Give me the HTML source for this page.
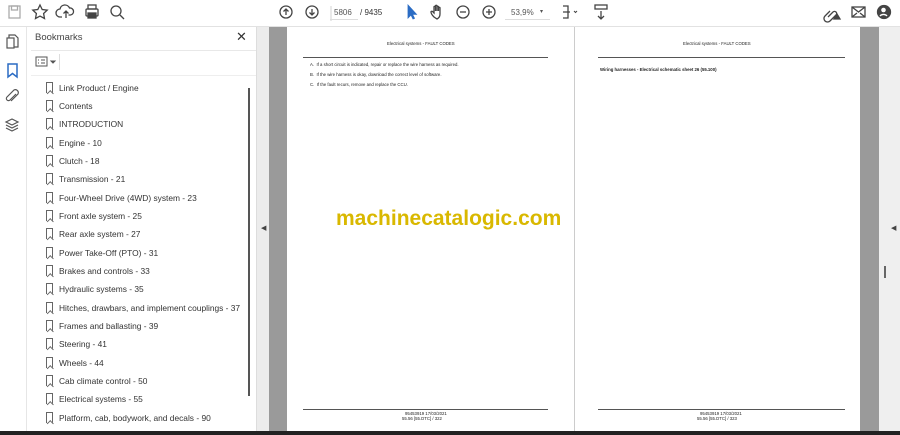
<!DOCTYPE html>
<html><head><style>
*{margin:0;padding:0;box-sizing:border-box}
body{width:900px;height:435px;overflow:hidden;background:#fff;font-family:"Liberation Sans",sans-serif;position:relative}
.a{position:absolute}
.tb{left:0;top:0;width:900px;height:27px;background:#fff;border-bottom:1px solid #e2e2e2}
.bm{position:absolute;left:46px;font-size:8.4px;color:#333;height:12px;line-height:12px}
.bm i{position:absolute;left:0;top:0;width:7px;height:11px;border:1.3px solid #666;border-bottom:none}
.bm i:after{content:"";position:absolute;left:0.5px;bottom:-2px;width:3.5px;height:3.5px;border-left:1.3px solid #666;border-top:1.3px solid #666;transform:rotate(45deg);background:#fff}
.bm span{position:absolute;left:13px;white-space:nowrap}
.pg{background:#fff;top:27px;height:404px}
.t{font-size:4.3px;color:#222;white-space:nowrap}
</style></head><body>
<div class="a tb"></div>
<svg class="a" style="left:0;top:0" width="900" height="27" fill="none" stroke="#444" stroke-width="1.3">
<rect x="9" y="6" width="11" height="12" stroke="#aaa"/><rect x="11.5" y="6" width="6" height="4" stroke="#aaa"/>
<path d="M40 5l2.2 4.5 5 .6-3.6 3.4.9 5-4.5-2.4-4.5 2.4.9-5-3.6-3.4 5-.6z"/>
<path d="M62 17h-2a4 4 0 0 1 0-8 5 5 0 0 1 9.5-1 3.5 3.5 0 0 1 1 7h-2M66 18v-7m-2.5 2.5L66 11l2.5 2.5"/>
<rect x="86" y="9" width="12" height="7" rx="1"/><rect x="88" y="5" width="8" height="4"/><rect x="88" y="13" width="8" height="5" fill="#444"/>
<circle cx="116" cy="11" r="5"/><path d="M120 15l4 4"/>
<circle cx="286" cy="12" r="6"/><path d="M286 15V9m-2.5 2.5L286 9l2.5 2.5"/>
<circle cx="312" cy="12" r="6"/><path d="M312 9v6m-2.5-2.5L312 15l2.5-2.5"/>
<path d="M331 21v-15" stroke="#ddd"/>
<path d="M408 5v13l3-3 2 4 1.5-.7-2-4h4z" fill="#2b6cc4" stroke="#2b6cc4" stroke-width=".8"/>
<path d="M434 17c-2-2-3-4-3-5 0-1 1.5-1 2 0l1 1V7c0-1 1.5-1 1.5 0v4-5c0-1 1.5-1 1.5 0v5-4c0-1 1.5-1 1.5 0v4-3c0-1 1.5-1 1.5 0v6c0 2-1 4-3 5z"/>
<circle cx="463" cy="12" r="6"/><path d="M460 12h6"/>
<circle cx="489" cy="12" r="6"/><path d="M486 12h6m-3-3v6"/>
<path d="M563 6h5v12h-5m0-6h7" /><path d="M574 11l1.5 1.5 1.5-1.5" stroke-width="1"/>
<rect x="595" y="5" width="12" height="4"/><path d="M601 11v8m-3-3l3 3 3-3"/>
<path d="M828 17l5-5a2 2 0 0 1 3 3l-6 6a3.5 3.5 0 0 1-5-5l5-5"/><path d="M834 19l3-5 3 5z" fill="#444"/>
<rect x="852" y="7" width="13" height="10"/><path d="M852 7l6.5 5 6.5-5M852 17l5-4m8 4l-5-4"/>
<circle cx="884" cy="12" r="6.5" fill="#444"/><circle cx="883.5" cy="10" r="2.3" fill="#fff" stroke="none"/><path d="M880 16a4 3 0 0 1 7 0" stroke="#fff"/>
</svg>
<div class="a" style="left:334px;top:8px;font-size:8px;color:#555">5806</div>
<div class="a" style="left:330px;top:19px;width:28px;border-top:1px solid #ddd"></div>
<div class="a" style="left:360px;top:8px;font-size:8px;color:#333">/ 9435</div>
<div class="a" style="left:511px;top:8px;font-size:8px;color:#555">53,9%</div>
<div class="a" style="left:540px;top:8px;font-size:6px;color:#555">▾</div>
<div class="a" style="left:505px;top:19px;width:45px;border-top:1px solid #ddd"></div>
<div class="a" style="left:26px;top:27px;width:1px;height:404px;background:#e6e6e6"></div>
<svg class="a" style="left:0;top:27px" width="26" height="110" fill="none" stroke="#555" stroke-width="1.2">
<rect x="7" y="11" width="7" height="10"/><path d="M9 11V8h6l3 3v9h-4"/>
<path d="M8 37h9v13l-4.5-3.5L8 50z" stroke="#2b6cc4" stroke-width="1.5"/>
<path d="M16 67l-6 6a2 2 0 0 1-3-3l7-7a3 3 0 0 1 4 4l-7 7"/>
<path d="M12 92l6 3-6 3-6-3z M6 98l6 3 6-3 M6 101l6 3 6-3"/>
</svg>
<div class="a" style="left:35px;top:32px;font-size:9.5px;color:#444">Bookmarks</div>
<div class="a" style="left:236px;top:29px;font-size:13px;color:#333">✕</div>
<div class="a" style="left:31px;top:50px;width:226px;border-top:1px solid #e8e8e8"></div>
<svg class="a" style="left:35px;top:56px" width="30" height="14" fill="none" stroke="#555" stroke-width="1"><rect x="1" y="1" width="11" height="9"/><path d="M3 4h1m2 0h4M3 7h1m2 0h4"/><path d="M16 5l2 2 2-2z" fill="#555"/></svg>
<div class="a" style="left:59px;top:54px;width:1px;height:16px;background:#ddd"></div>
<div class="a" style="left:31px;top:75px;width:226px;border-top:1px solid #eee"></div>
<div class="a" style="left:248px;top:88px;width:2px;height:308px;background:#555"></div>
<div class="a" style="left:256px;top:27px;width:1px;height:404px;background:#ddd"></div>
<div class="bm" style="top:82px"><i></i><span>Link Product / Engine</span></div>
<div class="bm" style="top:100px"><i></i><span>Contents</span></div>
<div class="bm" style="top:118px"><i></i><span>INTRODUCTION</span></div>
<div class="bm" style="top:137px"><i></i><span>Engine - 10</span></div>
<div class="bm" style="top:155px"><i></i><span>Clutch - 18</span></div>
<div class="bm" style="top:173px"><i></i><span>Transmission - 21</span></div>
<div class="bm" style="top:192px"><i></i><span>Four-Wheel Drive (4WD) system - 23</span></div>
<div class="bm" style="top:210px"><i></i><span>Front axle system - 25</span></div>
<div class="bm" style="top:228px"><i></i><span>Rear axle system - 27</span></div>
<div class="bm" style="top:247px"><i></i><span>Power Take-Off (PTO) - 31</span></div>
<div class="bm" style="top:265px"><i></i><span>Brakes and controls - 33</span></div>
<div class="bm" style="top:283px"><i></i><span>Hydraulic systems - 35</span></div>
<div class="bm" style="top:302px"><i></i><span>Hitches, drawbars, and implement couplings - 37</span></div>
<div class="bm" style="top:320px"><i></i><span>Frames and ballasting - 39</span></div>
<div class="bm" style="top:338px"><i></i><span>Steering - 41</span></div>
<div class="bm" style="top:357px"><i></i><span>Wheels - 44</span></div>
<div class="bm" style="top:375px"><i></i><span>Cab climate control - 50</span></div>
<div class="bm" style="top:393px"><i></i><span>Electrical systems - 55</span></div>
<div class="bm" style="top:412px"><i></i><span>Platform, cab, bodywork, and decals - 90</span></div>
<div class="a" style="left:257px;top:27px;width:12px;height:404px;background:#ececec"></div>
<div class="a" style="left:261px;top:224px;font-size:7px;color:#444">◀</div>
<div class="a" style="left:269px;top:27px;width:18px;height:404px;background:#9a9a9a"></div>
<div class="a" style="left:860px;top:27px;width:19px;height:404px;background:#9a9a9a"></div>
<div class="a" style="left:879px;top:27px;width:21px;height:404px;background:#efefef"></div>
<div class="a" style="left:891px;top:224px;font-size:7px;color:#444">◀</div>
<div class="a" style="left:884px;top:266px;width:2px;height:12px;background:#666"></div>
<div class="a pg" style="left:287px;width:287px"></div>
<div class="a pg" style="left:575px;width:285px"></div>
<div class="a" style="left:574px;top:27px;width:1px;height:404px;background:#ccc"></div>
<div class="a t" style="left:387px;top:41px">Electrical systems - FAULT CODES</div>
<div class="a t" style="left:683px;top:41px">Electrical systems - FAULT CODES</div>
<div class="a" style="left:303px;top:57px;width:245px;border-top:1px solid #555"></div>
<div class="a" style="left:598px;top:57px;width:247px;border-top:1px solid #555"></div>
<div class="a t" style="left:310px;top:62px">A.&nbsp; If a short circuit is indicated, repair or replace the wire harness as required.</div>
<div class="a t" style="left:310px;top:72px">B.&nbsp; If the wire harness is okay, download the correct level of software.</div>
<div class="a t" style="left:310px;top:82px">C.&nbsp; If the fault recurs, remove and replace the CCU.</div>
<div class="a t" style="left:600px;top:67px;font-weight:bold">Wiring harnesses - Electrical schematic sheet 26 (55.100)</div>
<div class="a" style="left:336px;top:207px;font-size:21px;font-weight:bold;color:#d9b800">machinecatalogic.com</div>
<div class="a" style="left:303px;top:409px;width:245px;border-top:1px solid #555"></div>
<div class="a" style="left:598px;top:409px;width:247px;border-top:1px solid #555"></div>
<div class="a t" style="left:405px;top:411px">95453919 17/03/2021</div>
<div class="a t" style="left:402px;top:416px">55.56 [55.DTC] / 322</div>
<div class="a t" style="left:700px;top:411px">95453919 17/03/2021</div>
<div class="a t" style="left:697px;top:416px">55.56 [55.DTC] / 323</div>
<div class="a" style="left:0;top:431px;width:900px;height:4px;background:#222"></div>
</body></html>
